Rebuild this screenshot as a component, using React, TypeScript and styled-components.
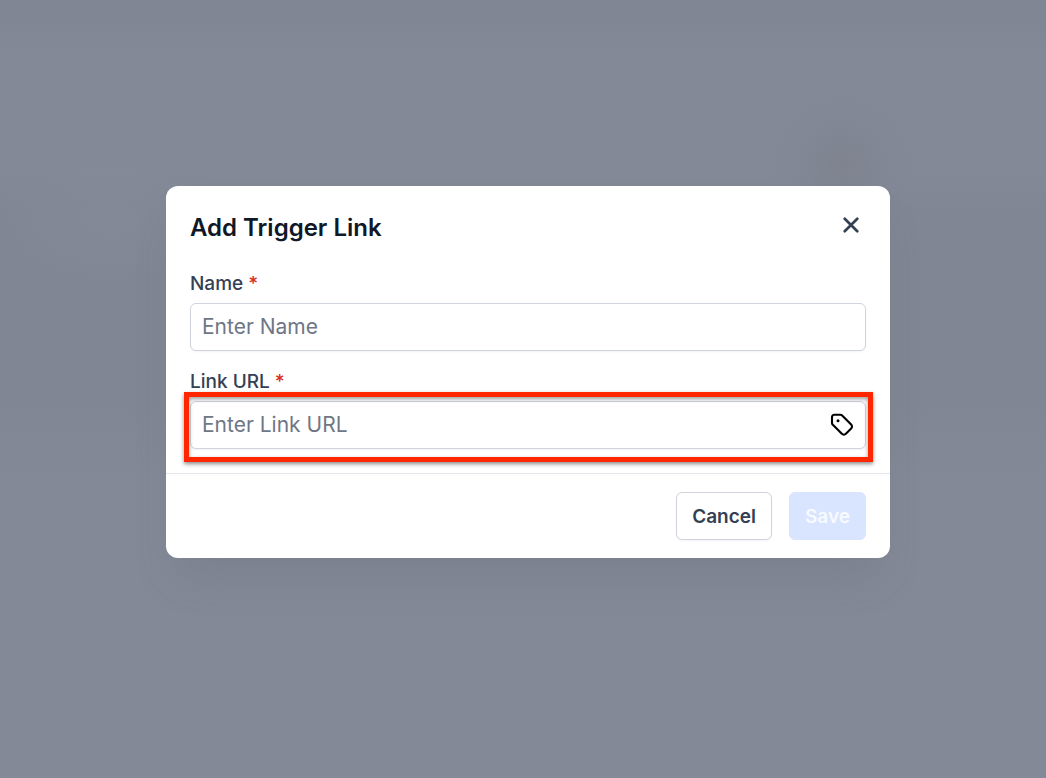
import React from "react";
import styled, { createGlobalStyle, css } from "styled-components";

const GlobalStyle = createGlobalStyle`
  *, *::before, *::after { box-sizing: border-box; }
  body {
    margin: 0;
    background: #838996;
    font-family: Inter, "Liberation Sans", sans-serif;
    color: #344054;
  }
`;

const Overlay = styled.main`
  min-height: 100vh;
  padding: 186px 156px 48px 166px;
  background:
    radial-gradient(circle at 842px 165px, rgba(122, 127, 138, 0.6) 0, rgba(124, 130, 143, 0.35) 36px, rgba(124, 130, 146, 0) 72px),
    radial-gradient(ellipse at 110px 220px, rgba(135, 141, 153, 0.5) 0, rgba(135, 141, 153, 0) 110px),
    linear-gradient(#808693 0, #808693 24px, #838996 48px, #838996 170px, #808693 210px, #808693 400px, #838996 480px);
`;

const Dialog = styled.form`
  width: 100%;
  background: #ffffff;
  border-radius: 12px;
  box-shadow: 0 28px 40px -12px rgba(95, 100, 113, 0.24);
`;

const Header = styled.header`
  display: flex;
  justify-content: space-between;
  align-items: flex-start;
  padding: 24px 24px 0;
`;

const Title = styled.h1`
  margin: 0;
  font-size: 24px;
  line-height: 36px;
  font-weight: 600;
  color: #101828;
`;

const CloseButton = styled.button`
  display: flex;
  padding: 0;
  margin: 0;
  border: 0;
  background: none;
  color: #344054;
  cursor: pointer;
`;

const Fields = styled.div`
  display: grid;
  gap: 18px;
  padding: 25px 24px 24px;
`;

const Field = styled.div`
  display: grid;
  gap: 6px;
`;

const Label = styled.label`
  font-size: 19px;
  line-height: 26px;
  font-weight: 500;
`;

const Required = styled.span`
  color: #d92d20;
`;

const InputBox = styled.div`
  position: relative;
  display: flex;
`;

const Input = styled.input`
  width: 100%;
  height: 48px;
  padding: 0 11px 2px;
  border: 1px solid #d0d5dd;
  border-radius: 6px;
  background: #ffffff;
  font-family: inherit;
  font-size: 21px;
  color: #344054;
  outline: none;
  box-shadow: 0 1px 2px rgba(16, 24, 40, 0.05);

  &::placeholder {
    color: #6f7686;
    opacity: 1;
  }
`;

const TagButton = styled.button`
  position: absolute;
  top: 11px;
  right: 11px;
  display: flex;
  padding: 0;
  border: 0;
  background: none;
  color: #000000;
  cursor: pointer;
`;

const Highlight = styled.span`
  position: absolute;
  inset: -9px -7px -13px -6px;
  border: 5px solid #ff2600;
  box-shadow: 0 2px 4px rgba(0, 0, 0, 0.45), inset 0 2px 4px rgba(0, 0, 0, 0.4);
  pointer-events: none;
`;

const Footer = styled.footer`
  display: flex;
  justify-content: flex-end;
  gap: 17px;
  padding: 18px 24px;
  border-top: 1px solid #e4e7ec;
`;

const Button = styled.button<{ $primary?: boolean }>`
  height: 48px;
  padding: 2px 15px 0;
  border: 1px solid #d0d5dd;
  border-radius: 6px;
  background: #ffffff;
  font-family: inherit;
  font-size: 19px;
  line-height: 26px;
  font-weight: 600;
  color: #344054;
  box-shadow: 0 1px 2px rgba(16, 24, 40, 0.05);
  ${(p) =>
    p.$primary &&
    css`
      border-color: #d9e4ff;
      background: #d9e4ff;
      color: #f7faff;
      box-shadow: none;
    `}
`;

const CloseIcon = () => (
  <svg width="30" height="30" viewBox="0 0 30 30" fill="none" stroke="currentColor" strokeWidth="2.7" strokeLinecap="round" aria-hidden="true">
    <path d="M8.7 8.7 21.3 21.3M21.3 8.7 8.7 21.3" />
  </svg>
);

const TagIcon = () => (
  <svg width="26" height="26" viewBox="0 0 26 26" fill="none" stroke="currentColor" strokeWidth="2.1" strokeLinejoin="round" aria-hidden="true">
    <path d="M5.4 2.7h5.9a2.6 2.6 0 0 1 1.85.75l9 9.1a2.8 2.8 0 0 1 0 4l-5.3 5.3a2.8 2.8 0 0 1-4 0l-9-9A2.6 2.6 0 0 1 3 11V5.1A2.4 2.4 0 0 1 5.4 2.7z" />
    <circle cx="9" cy="8.8" r="1.5" fill="currentColor" stroke="none" />
  </svg>
);

export default function App() {
  return (
    <>
      <GlobalStyle />
      <Overlay>
        <Dialog role="dialog" aria-labelledby="dialog-title" onSubmit={(e) => e.preventDefault()}>
          <Header>
            <Title id="dialog-title">Add Trigger Link</Title>
            <CloseButton type="button" aria-label="Close">
              <CloseIcon />
            </CloseButton>
          </Header>
          <Fields>
            <Field>
              <Label htmlFor="name">
                Name <Required>*</Required>
              </Label>
              <InputBox>
                <Input id="name" type="text" placeholder="Enter Name" />
              </InputBox>
            </Field>
            <Field>
              <Label htmlFor="link-url">
                Link URL <Required>*</Required>
              </Label>
              <InputBox>
                <Input id="link-url" type="text" placeholder="Enter Link URL" />
                <TagButton type="button" aria-label="Insert custom value">
                  <TagIcon />
                </TagButton>
                <Highlight />
              </InputBox>
            </Field>
          </Fields>
          <Footer>
            <Button type="button">Cancel</Button>
            <Button type="submit" $primary disabled>
              Save
            </Button>
          </Footer>
        </Dialog>
      </Overlay>
    </>
  );
}
